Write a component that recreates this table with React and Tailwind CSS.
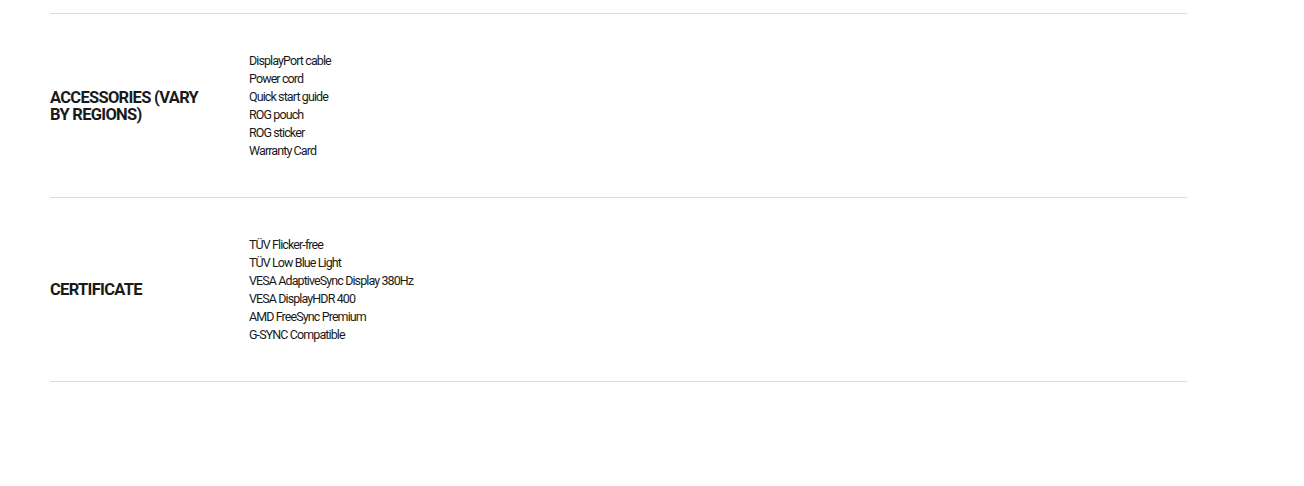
const specs = [
  {
    label: "ACCESSORIES (VARY BY REGIONS)",
    items: [
      "DisplayPort cable",
      "Power cord",
      "Quick start guide",
      "ROG pouch",
      "ROG sticker",
      "Warranty Card",
    ],
  },
  {
    label: "CERTIFICATE",
    items: [
      "TÜV Flicker-free",
      "TÜV Low Blue Light",
      "VESA AdaptiveSync Display 380Hz",
      "VESA DisplayHDR 400",
      "AMD FreeSync Premium",
      "G-SYNC Compatible",
    ],
  },
];

export default function App() {
  return (
    <div className="min-h-[486px] bg-white pt-[13px] font-['Roboto',sans-serif] text-[#1a1a1a]">
      <div className="ml-[50px] w-[1137px] border-b border-[#dcdcdc]">
        {specs.map((spec) => (
          <div
            key={spec.label}
            className="flex items-center border-t border-[#dcdcdc] h-[184px]"
          >
            <h3 className="w-[165px] shrink-0 text-[16.5px] font-bold leading-[17px] tracking-[-0.7px]">
              {spec.label}
            </h3>
            <ul className="ml-[34px] text-[12.5px] leading-[18px] tracking-[-0.9px]">
              {spec.items.map((item) => (
                <li key={item}>{item}</li>
              ))}
            </ul>
          </div>
        ))}
      </div>
    </div>
  );
}
